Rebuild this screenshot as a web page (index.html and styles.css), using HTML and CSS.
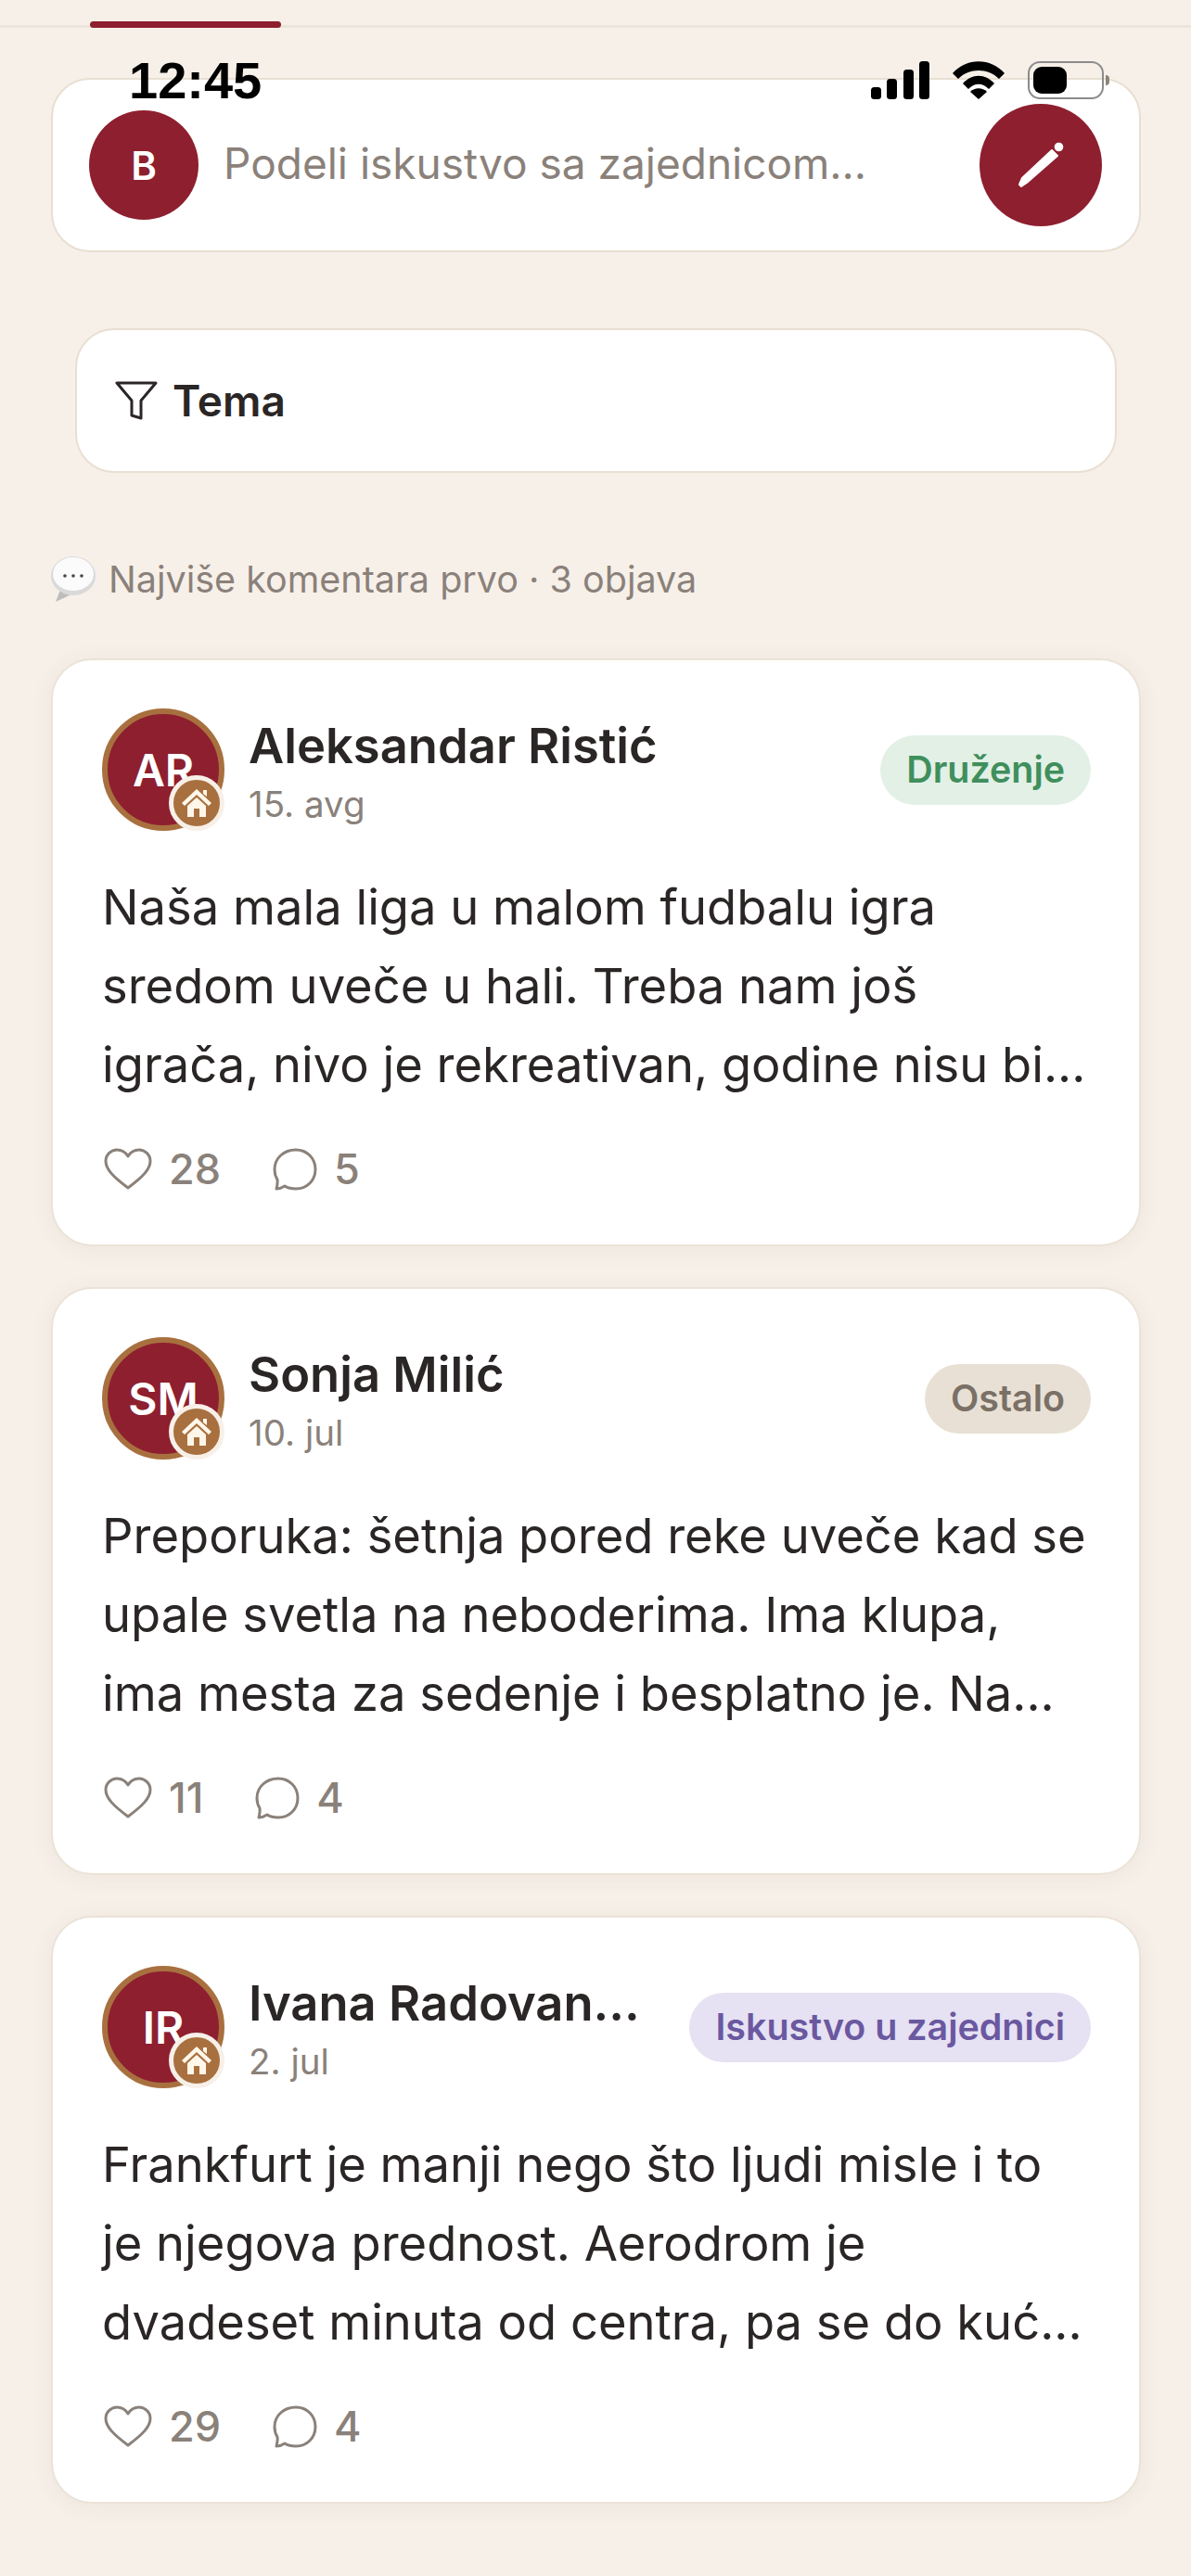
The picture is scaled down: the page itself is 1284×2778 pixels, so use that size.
FILE: index.html
```html
<!DOCTYPE html>
<html lang="en">
<head>
    <meta charset="UTF-8">
    <title>Zajednica</title>
    <link rel="stylesheet" href="styles.css">
</head>
<body>
    <div class="status-bar">
        <span class="status-time">12:45</span>
        <div class="status-icons">
            <svg width="63" height="41" viewBox="0 0 63 41"><rect x="0" y="28" width="11" height="13" rx="3.5"/><rect x="17" y="19" width="11" height="22" rx="3.5"/><rect x="35" y="9" width="11" height="32" rx="3.5"/><rect x="52" y="0" width="11" height="41" rx="3.5"/></svg>
            <svg width="56" height="41" viewBox="0 0 56 41"><path d="M0 13 C15 -4 41 -4 56 13 L50 19 C38 7 18 7 6 19Z"/><path d="M11 24 C21 13 35 13 45 24 L39 30 C32 23 24 23 17 30Z"/><path d="M28 41 L19 33 C24 28 32 28 37 33Z"/></svg>
            <div class="battery"><div class="battery-level"></div></div>
        </div>
    </div>

    <div class="tabs"><div class="tab-active"></div></div>

    <div class="compose-card">
        <div class="compose-avatar">B</div>
        <span class="compose-text">Podeli iskustvo sa zajednicom...</span>
        <button class="compose-button">
            <svg width="54" height="54" viewBox="0 0 54 54"><path d="M4 48 L7 41 L39 11 L45 17 L12 46 L6 50Z" fill="#fff" stroke="#fff" stroke-width="2" stroke-linejoin="round"/><circle cx="46.500" cy="7.500" r="4.800" fill="#fff"/></svg>
        </button>
    </div>

    <div class="filter-card">
        <svg width="46" height="42" viewBox="0 0 46 42" fill="none" stroke="#2b2626" stroke-width="3" stroke-linejoin="round"><path d="M2 2 H44 L28 21 V40 L18 37 V21Z"/></svg>
        <span>Tema</span>
    </div>

    <div class="sort-line">
        <svg width="48" height="50" viewBox="0 0 48 50"><path d="M10 36 L5 49 L22 41Z" fill="#bdbdbd"/><ellipse cx="24" cy="21" rx="24" ry="21" fill="#d9d9d9"/><ellipse cx="24" cy="19" rx="22" ry="18" fill="#fbfbfb"/><circle cx="15" cy="21" r="1.800" fill="#444"/><circle cx="24" cy="21" r="1.800" fill="#444"/><circle cx="33" cy="21" r="1.800" fill="#444"/></svg>
        <span>Najviše komentara prvo · 3 objava</span>
    </div>

    <div class="post-list">
        <div class="post-card">
            <div class="post-header">
                <div class="avatar">AR
                    <div class="avatar-badge">
                        <svg viewBox="0 0 34 34" width="34" height="34"><path d="M24 3 H28 V10 L24 7Z M17 2 L33 17 L30 20 L17 8 L4 20 L1 17Z M7 20 L17 11 L27 20 V32 H20 V23 H14 V32 H7Z" fill="#fff6ea"/></svg>
                    </div>
                </div>
                <div class="author">
                    <div class="author-name">Aleksandar Ristić</div>
                    <div class="post-date">15. avg</div>
                </div>
                <span class="tag tag-green">Druženje</span>
            </div>
            <p class="post-text">Naša mala liga u malom fudbalu igra<br>sredom uveče u hali. Treba nam još<br>igrača, nivo je rekreativan, godine nisu bi...</p>
            <div class="post-actions">
                <div class="action">
                    <svg class="icon" width="52" height="46" viewBox="0 0 52 46"><path d="M26 43 C10 31 2 23 2 14 C2 7 8 2 14 2 C19 2 23 4 26 9 C29 4 33 2 38 2 C44 2 50 7 50 14 C50 23 42 31 26 43Z"/></svg>
                    <span>28</span>
                </div>
                <div class="action">
                    <svg class="icon" width="48" height="46" viewBox="0 0 48 46"><path d="M4 44 C5 40 5.500 37 5 34 C3 31 2 27 2 23 C2 11 12 2 25 2 C37 2 46 11 46 23 C46 35 37 44 25 44 C20 44 16 43 13 41 C10 43 7 44 4 44Z"/></svg>
                    <span>5</span>
                </div>
            </div>
        </div>

        <div class="post-card">
            <div class="post-header">
                <div class="avatar">SM
                    <div class="avatar-badge">
                        <svg viewBox="0 0 34 34" width="34" height="34"><path d="M24 3 H28 V10 L24 7Z M17 2 L33 17 L30 20 L17 8 L4 20 L1 17Z M7 20 L17 11 L27 20 V32 H20 V23 H14 V32 H7Z" fill="#fff6ea"/></svg>
                    </div>
                </div>
                <div class="author">
                    <div class="author-name">Sonja Milić</div>
                    <div class="post-date">10. jul</div>
                </div>
                <span class="tag tag-beige">Ostalo</span>
            </div>
            <p class="post-text">Preporuka: šetnja pored reke uveče kad se<br>upale svetla na neboderima. Ima klupa,<br>ima mesta za sedenje i besplatno je. Na...</p>
            <div class="post-actions">
                <div class="action">
                    <svg class="icon" width="52" height="46" viewBox="0 0 52 46"><path d="M26 43 C10 31 2 23 2 14 C2 7 8 2 14 2 C19 2 23 4 26 9 C29 4 33 2 38 2 C44 2 50 7 50 14 C50 23 42 31 26 43Z"/></svg>
                    <span>11</span>
                </div>
                <div class="action">
                    <svg class="icon" width="48" height="46" viewBox="0 0 48 46"><path d="M4 44 C5 40 5.500 37 5 34 C3 31 2 27 2 23 C2 11 12 2 25 2 C37 2 46 11 46 23 C46 35 37 44 25 44 C20 44 16 43 13 41 C10 43 7 44 4 44Z"/></svg>
                    <span>4</span>
                </div>
            </div>
        </div>

        <div class="post-card">
            <div class="post-header">
                <div class="avatar">IR
                    <div class="avatar-badge">
                        <svg viewBox="0 0 34 34" width="34" height="34"><path d="M24 3 H28 V10 L24 7Z M17 2 L33 17 L30 20 L17 8 L4 20 L1 17Z M7 20 L17 11 L27 20 V32 H20 V23 H14 V32 H7Z" fill="#fff6ea"/></svg>
                    </div>
                </div>
                <div class="author">
                    <div class="author-name">Ivana Radovan...</div>
                    <div class="post-date">2. jul</div>
                </div>
                <span class="tag tag-purple">Iskustvo u zajednici</span>
            </div>
            <p class="post-text">Frankfurt je manji nego što ljudi misle i to<br>je njegova prednost. Aerodrom je<br>dvadeset minuta od centra, pa se do kuć...</p>
            <div class="post-actions">
                <div class="action">
                    <svg class="icon" width="52" height="46" viewBox="0 0 52 46"><path d="M26 43 C10 31 2 23 2 14 C2 7 8 2 14 2 C19 2 23 4 26 9 C29 4 33 2 38 2 C44 2 50 7 50 14 C50 23 42 31 26 43Z"/></svg>
                    <span>29</span>
                </div>
                <div class="action">
                    <svg class="icon" width="48" height="46" viewBox="0 0 48 46"><path d="M4 44 C5 40 5.500 37 5 34 C3 31 2 27 2 23 C2 11 12 2 25 2 C37 2 46 11 46 23 C46 35 37 44 25 44 C20 44 16 43 13 41 C10 43 7 44 4 44Z"/></svg>
                    <span>4</span>
                </div>
            </div>
        </div>
    </div>
</body>
</html>
```

FILE: styles.css
```css
body {
    font-family: Inter, "Liberation Sans", sans-serif;
    background-color: #f7f0e9;
    color: #2b2626;
    margin: 0;
    height: 2778px;
    position: relative;
    overflow: hidden;
}

/* Status bar sits on top of the page */
.status-bar {
    position: absolute;
    top: 54px;
    left: 0;
    right: 0;
    display: flex;
    justify-content: space-between;
    align-items: center;
    padding: 0 94px 0 139px;
    z-index: 2;
}
.status-time {
    font-family: "Liberation Sans", sans-serif;
    font-size: 56px;
    font-weight: 700;
    color: #000;
}
.status-icons {
    display: flex;
    align-items: center;
    gap: 25px;
}
.battery {
    position: relative;
    width: 82px;
    height: 41px;
    box-sizing: border-box;
    border: 2px solid #8c8c8c;
    border-radius: 13px;
    padding: 4px;
}
.battery::after {
    content: "";
    position: absolute;
    right: -8px;
    top: 13px;
    width: 4px;
    height: 11px;
    background-color: #8c8578;
    border-radius: 0 4px 4px 0;
}
.battery-level {
    width: 36px;
    height: 100%;
    background-color: #000;
    border-radius: 9px;
}

/* Tab underline */
.tabs {
    position: relative;
    height: 3px;
    margin-top: 27px;
    background-color: #ece5dc;
}
.tab-active {
    position: absolute;
    left: 97px;
    top: -4px;
    width: 206px;
    height: 7px;
    border-radius: 4px;
    background-color: #8e1f2f;
}

.compose-card {
    display: flex;
    align-items: center;
    margin: 54px 54px 0 55px;
    height: 188px;
    box-sizing: border-box;
    padding: 0 40px 0 39px;
    background-color: #fff;
    border: 2px solid #e8dfd2;
    border-radius: 42px;
}
.compose-avatar {
    width: 118px;
    height: 118px;
    border-radius: 50%;
    background-color: #8e1f2f;
    color: #fff;
    display: flex;
    justify-content: center;
    align-items: center;
    font-size: 42px;
    font-weight: 600;
    flex-shrink: 0;
}
.compose-text {
    flex: 1;
    margin: 0 0 4px 27px;
    font-size: 46px;
    color: #8a817a;
}
.compose-button {
    width: 132px;
    height: 132px;
    border: 0;
    padding: 0;
    border-radius: 50%;
    background-color: #8e1f2f;
    display: flex;
    justify-content: center;
    align-items: center;
}

.filter-card {
    display: flex;
    align-items: center;
    gap: 16px;
    margin: 82px 80px 0 81px;
    height: 156px;
    box-sizing: border-box;
    padding: 0 41px;
    background-color: #fff;
    border: 2px solid #e8dfd2;
    border-radius: 42px;
    font-size: 46px;
    font-weight: 600;
}

.sort-line {
    display: flex;
    align-items: center;
    gap: 14px;
    margin: 90px 55px 0;
    font-size: 39.5px;
    color: #8a817a;
}

.post-list {
    display: flex;
    flex-direction: column;
    gap: 44px;
    margin: 60px 54px 0 55px;
}
.post-card {
    height: 634px;
    box-sizing: border-box;
    padding: 52px 52px 0 53px;
    background-color: #fff;
    border: 2px solid #ebe3d7;
    border-radius: 44px;
    box-shadow: 0 3px 26px rgba(70, 55, 30, 0.06);
}

.post-header {
    display: flex;
    align-items: center;
}
.avatar {
    position: relative;
    width: 132px;
    height: 132px;
    box-sizing: border-box;
    border: 6px solid #a8703f;
    border-radius: 50%;
    background-color: #8e1f2f;
    color: #fff;
    display: flex;
    justify-content: center;
    align-items: center;
    font-size: 48px;
    font-weight: 600;
    flex-shrink: 0;
}
.avatar-badge {
    position: absolute;
    right: -6px;
    bottom: -6px;
    width: 60px;
    height: 60px;
    box-sizing: border-box;
    border: 5px solid #f7f0e9;
    border-radius: 50%;
    background-color: #a8703f;
    display: flex;
    justify-content: center;
    align-items: center;
}
.author {
    flex: 1;
    margin-left: 26px;
}
.author-name {
    font-size: 52.5px;
    font-weight: 600;
    line-height: 66px;
}
.post-date {
    margin-top: 7px;
    font-size: 38.5px;
    line-height: 46px;
    color: #8a817a;
}
.tag {
    padding: 0 28px;
    height: 75px;
    line-height: 75px;
    border-radius: 38px;
    font-size: 39.4px;
    font-weight: 600;
}
.tag-green {
    background-color: #e3f0e6;
    color: #3f8f5c;
}
.tag-beige {
    background-color: #e8e0d5;
    color: #7a7066;
}
.tag-purple {
    background-color: #e6e1f3;
    color: #6a58a0;
}

.post-text {
    margin: 40px 0 0;
    font-size: 52.5px;
    line-height: 85px;
    white-space: nowrap;
}

.post-actions {
    display: flex;
    align-items: center;
    gap: 56px;
    margin-top: 42px;
    padding-left: 2px;
    font-size: 45px;
    font-weight: 500;
    color: #8a817a;
}
.action {
    display: flex;
    align-items: center;
    gap: 18px;
}
.icon {
    fill: none;
    stroke: #8a817a;
    stroke-width: 3;
    stroke-linejoin: round;
}
```
